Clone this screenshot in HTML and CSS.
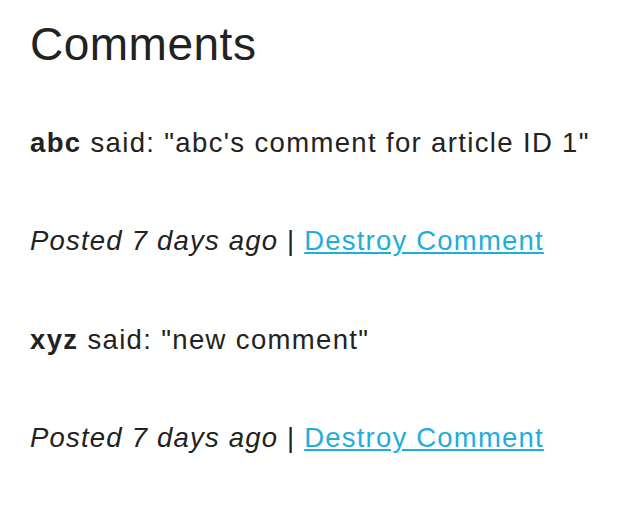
FILE: index.html
```html
<!DOCTYPE html>
<html>
<head>
<meta charset="utf-8">
<link rel="stylesheet" href="styles.css">
</head>
<body>
<div class="page">
  <h1 class="title">Comments</h1>
  <div class="comment">
    <p class="line body-line"><strong>abc</strong> said: "abc's comment for article ID 1"</p>
    <p class="line meta-line"><em>Posted 7 days ago</em> | <a href="#">Destroy Comment</a></p>
  </div>
  <div class="comment">
    <p class="line body-line"><strong>xyz</strong> said: "new comment"</p>
    <p class="line meta-line"><em>Posted 7 days ago</em> | <a href="#">Destroy Comment</a></p>
  </div>
</div>
</body>
</html>
```

FILE: styles.css
```css
html, body {
  margin: 0;
  padding: 0;
  background: #ffffff;
}
body {
  font-family: "Liberation Sans", Arial, Helvetica, sans-serif;
  color: #222222;
}
.page {
  padding: 17px 10px 0 30px;
}
.title {
  margin: 0 0 51px 0;
  font-size: 46px;
  line-height: 55px;
  font-weight: 400;
  letter-spacing: 0.5px;
}
.comment {
  display: flex;
  flex-direction: column;
  gap: 59px;
  margin-bottom: 60px;
}
.line {
  margin: 0;
  font-size: 27.5px;
  line-height: 39px;
  white-space: nowrap;
}
.body-line {
  letter-spacing: 1.35px;
}
.meta-line {
  letter-spacing: 1.2px;
}
.line strong {
  font-weight: 700;
}
.line em {
  font-style: italic;
}
.line a {
  color: #1eaedb;
  text-decoration: underline;
}
```
